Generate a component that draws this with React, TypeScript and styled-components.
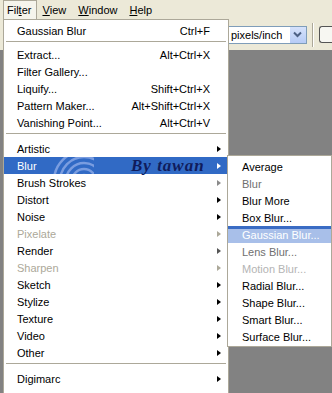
import React from "react";
import styled, { createGlobalStyle } from "styled-components";

const GlobalStyle = createGlobalStyle`
  html, body {
    margin: 0;
    padding: 0;
    background: #ece9d8;
  }
  body {
    font-family: "Liberation Sans", Arial, sans-serif;
    font-size: 11px;
  }
`;

const Page = styled.div`
  position: relative;
  width: 332px;
  height: 393px;
  overflow: hidden;
  display: flex;
  flex-direction: column;
  background: #ece9d8;
`;

const MenuBar = styled.div`
  height: 19px;
  display: flex;
  align-items: stretch;
  padding-left: 3px;
  background: #ece9d8;
`;

const BarItem = styled.div<{ $open?: boolean }>`
  display: flex;
  align-items: center;
  padding: 0 ${(p) => (p.$open ? "5px" : "6px")} 0 ${(p) => (p.$open ? "3px" : "4px")};
  color: #000;
  border: 1px solid ${(p) => (p.$open ? "#aca899" : "transparent")};
  border-bottom: none;
  background: ${(p) => (p.$open ? "#f5f4ec" : "transparent")};
`;

const Key = styled.span`
  text-decoration: underline;
`;

const OptionsBar = styled.div`
  height: 31px;
  display: flex;
  align-items: center;
  padding-left: 222px;
  gap: 5px;
  background: #ece9d8;
`;

const Select = styled.div`
  width: 88px;
  height: 18px;
  box-sizing: border-box;
  border: 1px solid #7f9db9;
  background: #fff;
  display: flex;
  align-items: center;
  justify-content: space-between;
  padding-left: 8px;
  color: #000;
`;

const SelectButton = styled.div`
  width: 16px;
  height: 16px;
  background: linear-gradient(#d6e2fb, #b6cbf6);
  border-left: 1px solid #fff;
  display: flex;
  align-items: center;
  justify-content: center;
`;

const BarSeparator = styled.div`
  width: 1px;
  height: 24px;
  background: #aca899;
  border-right: 1px solid #fff;
`;

const CutButton = styled.div`
  width: 14px;
  height: 17px;
  box-sizing: border-box;
  border: 1px solid #555;
  border-right: none;
  border-radius: 3px 0 0 3px;
  background: #f7f7f2;
`;

const Canvas = styled.div`
  flex: 1;
  background: #828282;
`;

const Menu = styled.div<{ $left: number; $top: number; $width: number }>`
  position: absolute;
  left: ${(p) => p.$left}px;
  top: ${(p) => p.$top}px;
  width: ${(p) => p.$width}px;
  box-sizing: border-box;
  background: #fff;
  border: 1px solid #aca899;
  padding: 2px 0 1px;
  display: flex;
  flex-direction: column;
`;

const Row = styled.div<{ $hot?: boolean; $soft?: boolean; $pad: number }>`
  position: relative;
  height: 17px;
  display: flex;
  align-items: center;
  padding-left: ${(p) => p.$pad}px;
  color: ${(p) => (p.$hot || p.$soft ? "#fff" : "#000")};
  background: ${(p) =>
    p.$hot
      ? "#316ac5"
      : p.$soft
      ? "linear-gradient(#3a6cc4 0 3px, #a8bfe9 3px)"
      : "transparent"};
  white-space: nowrap;
`;

const Label = styled.span<{ $tone?: string }>`
  flex: 1;
  position: relative;
  z-index: 1;
  color: ${(p) => p.$tone || "inherit"};
`;

const Shortcut = styled.span`
  position: relative;
  z-index: 1;
`;

const ArrowSlot = styled.span`
  width: 18px;
  box-sizing: border-box;
  padding-left: 7px;
  display: flex;
  align-items: center;
  position: relative;
  z-index: 1;
`;

const Arrow = styled.span<{ $color: string }>`
  width: 0;
  height: 0;
  border-top: 3.5px solid transparent;
  border-bottom: 3.5px solid transparent;
  border-left: 4px solid ${(p) => p.$color};
`;

const Separator = styled.div<{ $h: number }>`
  height: ${(p) => p.$h}px;
  display: flex;
  align-items: flex-start;
  padding: 2px 2px 0 2px;
  box-sizing: border-box;

  &::before {
    content: "";
    flex: 1;
    height: 1px;
    background: #aca899;
  }
`;

const Watermark = styled.span`
  position: absolute;
  left: 127px;
  top: 0;
  line-height: 17px;
  font-family: "Liberation Serif", "DejaVu Serif", serif;
  font-weight: bold;
  font-style: italic;
  font-size: 17px;
  letter-spacing: 1px;
  color: #101c5c;
  z-index: 1;
`;

const Swirl = styled.svg`
  position: absolute;
  left: 30px;
  top: 0;
`;

type Item =
  | { sep: number }
  | {
      label: string;
      key?: string;
      sub?: boolean;
      tone?: string;
      arrow?: string;
      hot?: boolean;
      soft?: boolean;
      mark?: boolean;
    };

const mainItems: Item[] = [
  { label: "Gaussian Blur", key: "Ctrl+F" },
  { sep: 7 },
  { label: "Extract...", key: "Alt+Ctrl+X" },
  { label: "Filter Gallery..." },
  { label: "Liquify...", key: "Shift+Ctrl+X" },
  { label: "Pattern Maker...", key: "Alt+Shift+Ctrl+X" },
  { label: "Vanishing Point...", key: "Alt+Ctrl+V" },
  { sep: 9 },
  { label: "Artistic", sub: true },
  { label: "Blur", sub: true, hot: true, mark: true },
  { label: "Brush Strokes", sub: true, arrow: "#8a8a8a" },
  { label: "Distort", sub: true },
  { label: "Noise", sub: true },
  { label: "Pixelate", sub: true, tone: "#aca899", arrow: "#aca899" },
  { label: "Render", sub: true, arrow: "#555" },
  { label: "Sharpen", sub: true, tone: "#aca899", arrow: "#aca899" },
  { label: "Sketch", sub: true },
  { label: "Stylize", sub: true },
  { label: "Texture", sub: true },
  { label: "Video", sub: true },
  { label: "Other", sub: true },
  { sep: 9 },
  { label: "Digimarc", sub: true },
  { label: "", sub: true },
];

const blurItems: Item[] = [
  { label: "Average" },
  { label: "Blur", tone: "#6f6f6f" },
  { label: "Blur More" },
  { label: "Box Blur..." },
  { label: "Gaussian Blur...", soft: true },
  { label: "Lens Blur...", tone: "#6f6f6f" },
  { label: "Motion Blur...", tone: "#b4b4b4" },
  { label: "Radial Blur..." },
  { label: "Shape Blur..." },
  { label: "Smart Blur..." },
  { label: "Surface Blur..." },
];

const renderItems = (items: Item[], pad: number) =>
  items.map((it, i) => {
    if ("sep" in it) return <Separator key={i} $h={it.sep} />;
    return (
      <Row key={i} $hot={it.hot} $soft={it.soft} $pad={pad}>
        {it.mark && (
          <>
            <Swirl width="60" height="17" viewBox="0 0 60 17">
              {[6, 12, 18, 24, 30].map((r) => (
                <circle
                  key={r}
                  cx="50"
                  cy="24"
                  r={r}
                  fill="none"
                  stroke="#7a9de0"
                  strokeWidth="2.5"
                />
              ))}
            </Swirl>
            <Watermark>By tawan</Watermark>
          </>
        )}
        <Label $tone={it.tone}>{it.label}</Label>
        {it.key && <Shortcut>{it.key}</Shortcut>}
        {it.sub && (
          <ArrowSlot>
            <Arrow $color={it.hot ? "#fff" : it.arrow || "#000"} />
          </ArrowSlot>
        )}
        {!it.sub && pad === 13 && <ArrowSlot />}
      </Row>
    );
  });

const Chevron = () => (
  <svg width="9" height="7" viewBox="0 0 9 7">
    <path d="M1 1.5 L4.5 5 L8 1.5" fill="none" stroke="#4d6185" strokeWidth="2" />
  </svg>
);

export default function App() {
  return (
    <>
      <GlobalStyle />
      <Page>
        <MenuBar>
          <BarItem $open>
            Fil<Key>t</Key>er
          </BarItem>
          <BarItem>
            <Key>V</Key>iew
          </BarItem>
          <BarItem>
            <Key>W</Key>indow
          </BarItem>
          <BarItem>
            <Key>H</Key>elp
          </BarItem>
        </MenuBar>
        <OptionsBar>
          <Select>
            pixels/inch
            <SelectButton>
              <Chevron />
            </SelectButton>
          </Select>
          <BarSeparator />
          <CutButton />
        </OptionsBar>
        <Canvas />

        <Menu $left={3} $top={19} $width={226}>
          {renderItems(mainItems, 13)}
        </Menu>
        <Menu $left={227} $top={155} $width={105}>
          {renderItems(blurItems, 14)}
        </Menu>
      </Page>
    </>
  );
}
